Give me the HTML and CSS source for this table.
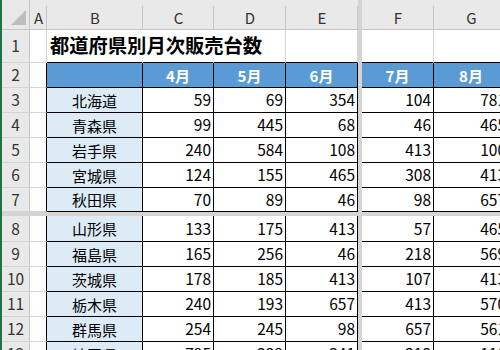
FILE: index.html
```html
<!DOCTYPE html>
<html lang="ja">
<head>
<meta charset="utf-8">
<title>都道府県別月次販売台数</title>
<link rel="stylesheet" href="styles.css">
</head>
<body>
<div class="sheet">
  <div class="vsplit"></div>
  <div class="hsplit"></div>

  <div class="corner"><svg width="27" height="29" viewBox="0 0 27 29"><polygon points="24,10 24,25 9,25" fill="#bdbdbd"/></svg></div>
  <div class="colh">A</div>
  <div class="colh">B</div>
  <div class="colh">C</div>
  <div class="colh">D</div>
  <div class="colh">E</div>
  <div class="colh">F</div>
  <div class="colh">G</div>

  <div class="rowh">1</div>
  <div class="cell"></div>
  <div class="cell top nb title">都道府県別月次販売台数</div>
  <div class="cell top nb"></div>
  <div class="cell top"></div>
  <div class="cell top"></div>
  <div class="cell top"></div>
  <div class="cell top"></div>

  <div class="rowh">2</div>
  <div class="cell lb"></div>
  <div class="cell t mh"></div>
  <div class="cell t mh">4月</div>
  <div class="cell t mh">5月</div>
  <div class="cell t mh">6月</div>
  <div class="cell t mh">7月</div>
  <div class="cell t mh">8月</div>

  <div class="rowh">3</div>
  <div class="cell lb"></div>
  <div class="cell t pref">北海道</div>
  <div class="cell t num">59</div>
  <div class="cell t num">69</div>
  <div class="cell t num">354</div>
  <div class="cell t num">104</div>
  <div class="cell t num">781</div>

  <div class="rowh">4</div>
  <div class="cell lb"></div>
  <div class="cell t pref">青森県</div>
  <div class="cell t num">99</div>
  <div class="cell t num">445</div>
  <div class="cell t num">68</div>
  <div class="cell t num">46</div>
  <div class="cell t num">465</div>

  <div class="rowh">5</div>
  <div class="cell lb"></div>
  <div class="cell t pref">岩手県</div>
  <div class="cell t num">240</div>
  <div class="cell t num">584</div>
  <div class="cell t num">108</div>
  <div class="cell t num">413</div>
  <div class="cell t num">100</div>

  <div class="rowh">6</div>
  <div class="cell lb"></div>
  <div class="cell t pref">宮城県</div>
  <div class="cell t num">124</div>
  <div class="cell t num">155</div>
  <div class="cell t num">465</div>
  <div class="cell t num">308</div>
  <div class="cell t num">413</div>

  <div class="rowh">7</div>
  <div class="cell lb"></div>
  <div class="cell t pref">秋田県</div>
  <div class="cell t num">70</div>
  <div class="cell t num">89</div>
  <div class="cell t num">46</div>
  <div class="cell t num">98</div>
  <div class="cell t num">657</div>

  <div class="rowh">8</div>
  <div class="cell lb"></div>
  <div class="cell t pref">山形県</div>
  <div class="cell t num">133</div>
  <div class="cell t num">175</div>
  <div class="cell t num">413</div>
  <div class="cell t num">57</div>
  <div class="cell t num">465</div>

  <div class="rowh">9</div>
  <div class="cell lb"></div>
  <div class="cell t pref">福島県</div>
  <div class="cell t num">165</div>
  <div class="cell t num">256</div>
  <div class="cell t num">46</div>
  <div class="cell t num">218</div>
  <div class="cell t num">569</div>

  <div class="rowh">10</div>
  <div class="cell lb"></div>
  <div class="cell t pref">茨城県</div>
  <div class="cell t num">178</div>
  <div class="cell t num">185</div>
  <div class="cell t num">413</div>
  <div class="cell t num">107</div>
  <div class="cell t num">413</div>

  <div class="rowh">11</div>
  <div class="cell lb"></div>
  <div class="cell t pref">栃木県</div>
  <div class="cell t num">240</div>
  <div class="cell t num">193</div>
  <div class="cell t num">657</div>
  <div class="cell t num">413</div>
  <div class="cell t num">570</div>

  <div class="rowh">12</div>
  <div class="cell lb"></div>
  <div class="cell t pref">群馬県</div>
  <div class="cell t num">254</div>
  <div class="cell t num">245</div>
  <div class="cell t num">98</div>
  <div class="cell t num">657</div>
  <div class="cell t num">561</div>

  <div class="rowh">13</div>
  <div class="cell lb"></div>
  <div class="cell t pref">埼玉県</div>
  <div class="cell t num">795</div>
  <div class="cell t num">239</div>
  <div class="cell t num">341</div>
  <div class="cell t num">213</div>
  <div class="cell t num">111</div>
</div>
</body>
</html>
```
FILE: styles.css
```css
html, body {
  margin: 0;
  padding: 0;
  background: #ffffff;
  overflow: hidden;
}

.sheet {
  display: grid;
  width: max-content;
  grid-template-columns: 28px 17px 96px 71px 72px 72px 4px 72px 75px;
  grid-template-rows: 30px 33px 25px 25px 25px 25px 25px 24px 4px 26px 25px 25px 25px 25px 25px;
  border-left: 2px solid #217346;
  font-family: "Noto Sans CJK JP", "Noto Sans", sans-serif;
  font-size: 15px;
  color: #000;
}

.vsplit {
  grid-column: 7;
  grid-row: 1 / -1;
  background: #d4d4d4;
}

.hsplit {
  grid-column: 1 / -1;
  grid-row: 9;
  background: #d4d4d4;
}

.corner,
.colh,
.rowh,
.cell {
  box-sizing: border-box;
  display: flex;
  align-items: center;
  line-height: 1;
  white-space: nowrap;
  min-width: 0;
}

.corner {
  background: #e9e9e9;
  border-right: 1px solid #c6c6c6;
  border-bottom: 1px solid #c6c6c6;
}

.corner svg {
  display: block;
}

.colh {
  justify-content: center;
  padding-top: 5px;
  background: #e9e9e9 linear-gradient(#c6c6c6, #c6c6c6) right bottom / 1px 23px no-repeat;
  border-bottom: 1px solid #c6c6c6;
  color: #333;
  font-size: 15px;
}

.colh:last-of-type {
  padding-right: 2px;
}

.rowh {
  justify-content: center;
  background: #e9e9e9;
  border-right: 1px solid #c6c6c6;
  border-bottom: 1px solid #d4d4d4;
  color: #333;
  font-size: 15.5px;
}

.cell {
  border-right: 1px solid #d4d4d4;
  border-bottom: 1px solid #d4d4d4;
  overflow: visible;
}

.cell.top {
  border-bottom-color: #000;
}

.cell.nb {
  border-right-color: transparent;
}

.cell.lb {
  border-right-color: #000;
}

.cell.t {
  border-right-color: #000;
  border-bottom-color: #000;
}

.title {
  padding-left: 3px;
  font-size: 19.3px;
  font-weight: 700;
}

.mh {
  justify-content: center;
  background: #5b9bd5;
  color: #ffffff;
  font-weight: 700;
}

.pref {
  justify-content: center;
  background: #ddebf7;
}

.num {
  justify-content: flex-end;
  padding-right: 2px;
  font-size: 15.5px;
}
```
